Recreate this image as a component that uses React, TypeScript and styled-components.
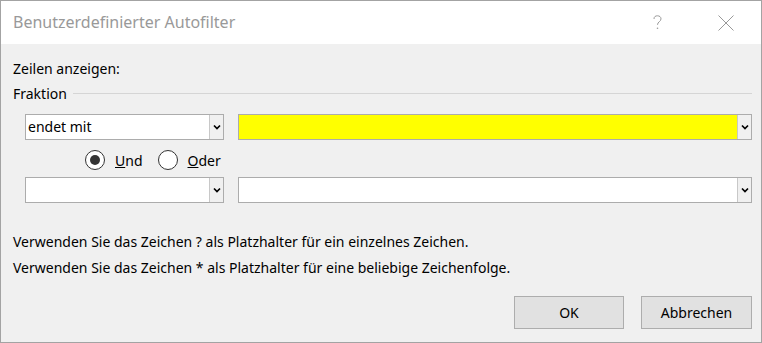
import React from 'react'
import styled, { createGlobalStyle } from 'styled-components'

const GlobalStyle = createGlobalStyle`
  html, body {
    margin: 0;
    padding: 0;
  }
  body {
    font-family: 'Noto Sans', 'Open Sans', sans-serif;
    color: #000;
  }
`

const Window = styled.div`
  box-sizing: border-box;
  width: 762px;
  height: 343px;
  border: 1px solid #a3a3a3;
  background: #f0f0f0;
  display: flex;
  flex-direction: column;
  overflow: hidden;
`

const TitleBar = styled.div`
  height: 43px;
  flex: none;
  background: #fff;
  display: flex;
  align-items: center;
  padding-left: 12px;
`

const Title = styled.div`
  flex: 1;
  font-size: 16px;
  color: #999;
  padding-bottom: 1px;
`

const TitleButton = styled.div<{ $width: number }>`
  width: ${(p) => p.$width}px;
  height: 43px;
  display: flex;
  align-items: center;
  justify-content: center;
  color: #999;
`

const Body = styled.div`
  flex: 1;
  display: flex;
  flex-direction: column;
  padding: 15px 9px 0 12px;
  font-size: 14px;
`

const Label = styled.div`
  height: 20px;
  line-height: 20px;
`

const GroupHeader = styled.div`
  margin-top: 4px;
  height: 20px;
  display: flex;
  align-items: center;
  gap: 6px;
`

const Rule = styled.div`
  flex: 1;
  height: 1px;
  background: #d5d5d5;
`

const ConditionRow = styled.div<{ $top: number }>`
  margin-top: ${(p) => p.$top}px;
  display: flex;
  gap: 14px;
  padding-left: 12px;
`

const Combo = styled.div<{ $width: number; $fill?: string }>`
  box-sizing: border-box;
  width: ${(p) => p.$width}px;
  height: 26px;
  border: 1px solid #acacac;
  background: ${(p) => p.$fill || '#fff'};
  display: flex;
`

const ComboText = styled.div`
  flex: 1;
  padding-left: 2px;
  line-height: 24px;
  font-size: 14px;
`

const ComboButton = styled.div`
  width: 13px;
  border-left: 1px solid #c8c8c8;
  background: #f0f0f0;
  display: flex;
  align-items: center;
  justify-content: center;
`

const RadioRow = styled.div`
  height: 37px;
  display: flex;
  align-items: center;
  padding-left: 72px;
  gap: 15px;
`

const RadioItem = styled.label`
  display: flex;
  align-items: center;
  gap: 10px;
  font-size: 14px;
  padding-top: 3px;
`

const RadioCircle = styled.span<{ $checked?: boolean }>`
  box-sizing: border-box;
  width: 20px;
  height: 20px;
  border-radius: 50%;
  border: 1px solid #333;
  background: #fff;
  display: flex;
  align-items: center;
  justify-content: center;

  &::after {
    content: '';
    display: ${(p) => (p.$checked ? 'block' : 'none')};
    width: 10px;
    height: 10px;
    border-radius: 50%;
    background: #333;
  }
`

const Hints = styled.div`
  margin-top: 26px;
  line-height: 26px;
`

const Footer = styled.div`
  margin-top: 15px;
  display: flex;
  justify-content: flex-end;
  gap: 17px;
`

const Button = styled.button<{ $width: number }>`
  box-sizing: border-box;
  width: ${(p) => p.$width}px;
  height: 33px;
  border: 1px solid #adadad;
  background: #e1e1e1;
  font-family: inherit;
  font-size: 14px;
  color: #000;
  padding: 0;
`

const Chevron = () => (
  <svg width="8" height="6" viewBox="0 0 8 6">
    <path d="M1 1.5 L4 4.5 L7 1.5" fill="none" stroke="#000" strokeWidth="1.7" />
  </svg>
)

const ComboBox: React.FC<{ width: number; value?: string; fill?: string }> = ({
  width,
  value,
  fill,
}) => (
  <Combo $width={width} $fill={fill}>
    <ComboText>{value}</ComboText>
    <ComboButton>
      <Chevron />
    </ComboButton>
  </Combo>
)

export default function App() {
  return (
    <>
      <GlobalStyle />
      <Window>
        <TitleBar>
          <Title>Benutzerdefinierter Autofilter</Title>
          <TitleButton $width={18}>
            <svg width="9" height="15" viewBox="0 0 9 15">
              <path
                d="M1 4 C1 1.5 2.6 0.8 4.5 0.8 C6.5 0.8 8 2 8 3.9 C8 6.6 4.5 6.8 4.5 9.8"
                fill="none"
                stroke="#999"
                strokeWidth="1"
              />
              <circle cx="4.5" cy="13.3" r="0.8" fill="#999" />
            </svg>
          </TitleButton>
          <TitleButton $width={52} />
          <TitleButton $width={16}>
            <svg width="16" height="16" viewBox="0 0 16 16">
              <path d="M0.5 0.5 L15.5 15.5 M15.5 0.5 L0.5 15.5" stroke="#999" strokeWidth="1" />
            </svg>
          </TitleButton>
          <TitleButton $width={27} />
        </TitleBar>
        <Body>
          <Label>Zeilen anzeigen:</Label>
          <GroupHeader>
            Fraktion
            <Rule />
          </GroupHeader>
          <ConditionRow $top={11}>
            <ComboBox width={199} value="endet mit" />
            <ComboBox width={514} fill="#ffff00" />
          </ConditionRow>
          <RadioRow>
            <RadioItem>
              <RadioCircle $checked />
              <span>
                <u>U</u>nd
              </span>
            </RadioItem>
            <RadioItem>
              <RadioCircle />
              <span>
                <u>O</u>der
              </span>
            </RadioItem>
          </RadioRow>
          <ConditionRow $top={0}>
            <ComboBox width={199} />
            <ComboBox width={514} />
          </ConditionRow>
          <Hints>
            <div>Verwenden Sie das Zeichen ? als Platzhalter für ein einzelnes Zeichen.</div>
            <div>Verwenden Sie das Zeichen * als Platzhalter für eine beliebige Zeichenfolge.</div>
          </Hints>
          <Footer>
            <Button $width={110}>OK</Button>
            <Button $width={111}>Abbrechen</Button>
          </Footer>
        </Body>
      </Window>
    </>
  )
}
